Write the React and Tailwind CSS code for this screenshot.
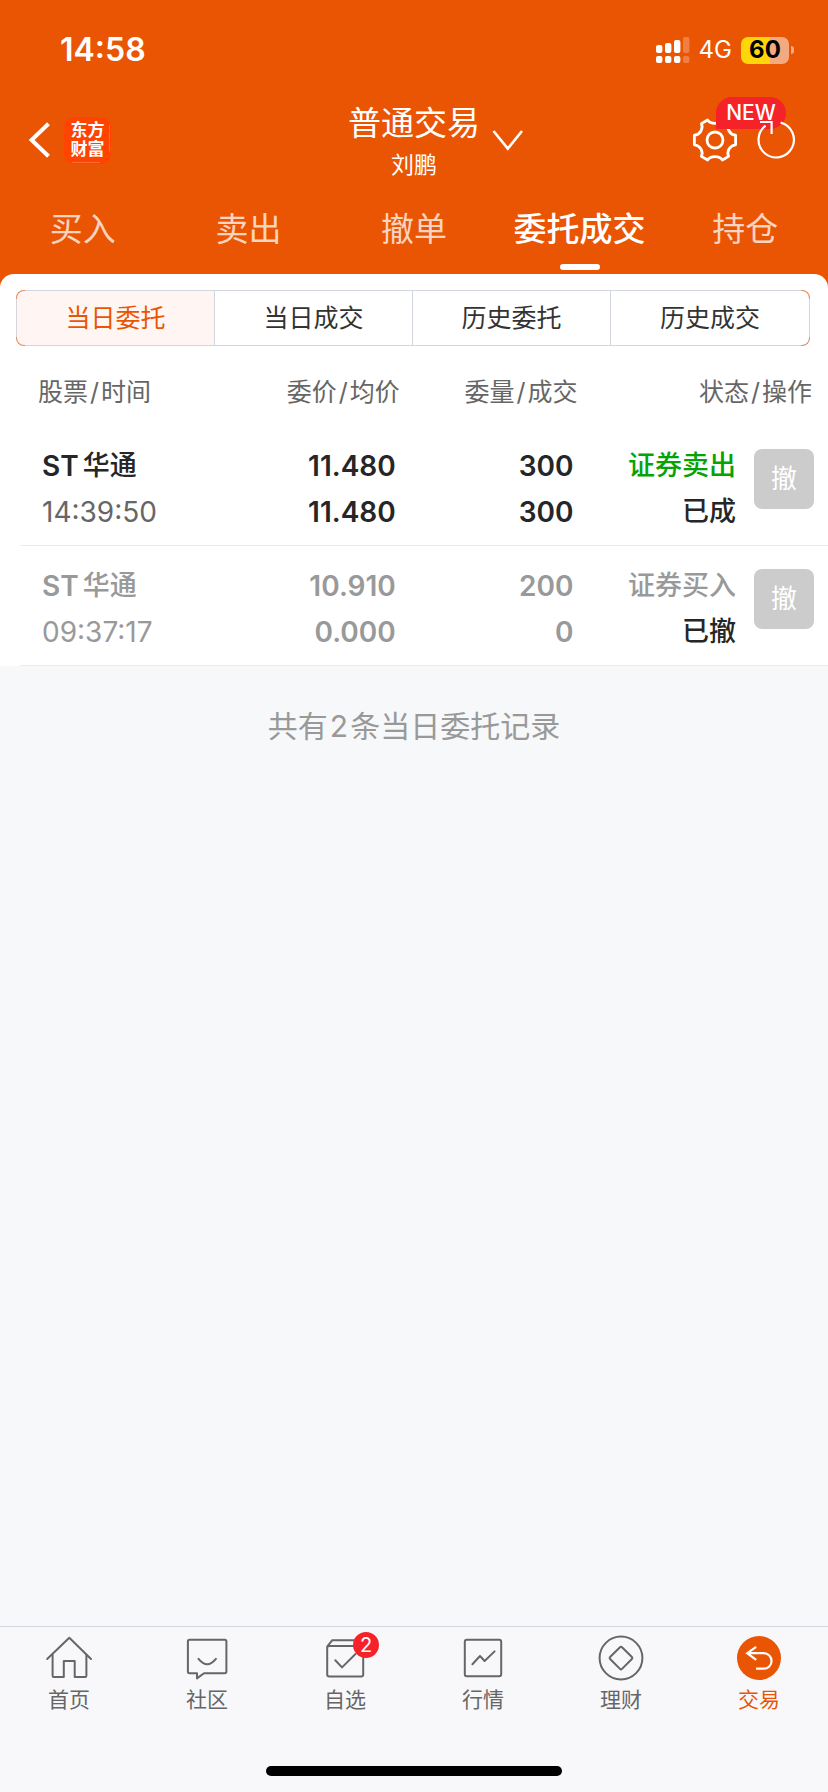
import React from 'react';

const ORDERS = [
  {
    prefix: 'ST', name: '华通', time: '14:39:50', price: '11.480', average: '11.480', amount: '300', filled: '300',
    side: '证券卖出', status: '已成', strong: 'text-[#262626]', timeColor: 'text-[#666666]', sideColor: 'text-[#06a206]',
  },
  {
    prefix: 'ST', name: '华通', time: '09:37:17', price: '10.910', average: '0.000', amount: '200', filled: '0',
    side: '证券买入', status: '已撤', strong: 'text-[#999999]', timeColor: 'text-[#999999]', sideColor: 'text-[#999999]',
  },
];

const TABS = ['买入', '卖出', '撤单', '委托成交', '持仓'];
const SEGMENTS = ['当日委托', '当日成交', '历史委托', '历史成交'];
const COLUMNS = [
  ['股票', '时间'],
  ['委价', '均价'],
  ['委量', '成交'],
  ['状态', '操作'],
];

function Line({ children }) {
  return (
    <svg viewBox="0 0 48 48" className="size-12" fill="none" stroke="currentColor" strokeWidth="2" strokeLinejoin="round" strokeLinecap="round" aria-hidden="true">
      {children}
    </svg>
  );
}

const NAV = [
  {
    label: '首页',
    icon: (
      <Line>
        <path d="M2.2 25 24.3 3.8 46 25" />
        <path d="M7.6 21V41.8q0 1.2 1.2 1.2H18.8V27H29.7V43H40.2q1.2 0 1.2-1.2V21" />
      </Line>
    ),
  },
  {
    label: '社区',
    icon: (
      <Line>
        <path d="M6.5 5.8H41.8q1.6 0 1.6 1.6V37.6q0 1.6-1.6 1.6H21L14 44.4V39.2H6.5q-1.6 0-1.6-1.6V7.4q0-1.6 1.6-1.6Z" />
        <path d="M15.5 24.8q8.7 10.8 17.4 0" />
      </Line>
    ),
  },
  {
    label: '自选',
    badge: '2',
    icon: (
      <Line>
        <rect x="6.2" y="12" width="36" height="30.4" rx="2" />
        <path d="M6.4 12.4 11.3 6.2H37L42 12.4" />
        <path d="M14.3 26.3 21 33.4 34.5 20" />
      </Line>
    ),
  },
  {
    label: '行情',
    icon: (
      <Line>
        <rect x="5.8" y="5.8" width="36.4" height="36.4" rx="2" />
        <path d="M13.4 30.2 21 22 25.6 27 35.6 17.4" />
      </Line>
    ),
  },
  {
    label: '理财',
    icon: (
      <Line>
        <circle cx="24" cy="24" r="21.4" />
        <path d="M23 13.2q1-1 2 0L34.9 23q1 1 0 2L25 34.9q-1 1-2 0L13.1 25q-1-1 0-2Z" />
      </Line>
    ),
  },
  {
    label: '交易',
    active: true,
    icon: (
      <svg viewBox="0 0 48 48" className="size-12" fill="none" aria-hidden="true">
        <circle cx="24" cy="24" r="22" fill="#ea5504" />
        <path d="M21.2 12.8 12.2 19.2 21.2 25.8M12.4 19.2H28.8a7.75 7.75 0 0 1 0 15.5H21" stroke="#fff" strokeWidth="2.2" />
      </svg>
    ),
  },
];

function StatusBar() {
  return (
    <div className="flex h-[100px] items-center justify-between pr-[34px] pl-[60px]">
      <time className="text-[32px] leading-10 font-semibold">14:58</time>
      <div className="flex items-center gap-[9px]">
        <svg viewBox="0 0 34 28" className="h-7 w-[34px]" fill="#fff" aria-hidden="true">
          <rect x="0" y="9" width="6.4" height="8" rx="2" />
          <rect x="9" y="7" width="6.4" height="10" rx="2" />
          <rect x="18" y="4" width="6.4" height="13" rx="2" />
          <rect x="27" y="1" width="6.4" height="16" rx="2" opacity=".25" />
          <rect x="0" y="20" width="6.4" height="7" rx="2" />
          <rect x="9" y="20" width="6.4" height="7" rx="2" />
          <rect x="18" y="20" width="6.4" height="7" rx="2" />
          <rect x="27" y="20" width="6.4" height="7" rx="2" opacity=".25" />
        </svg>
        <span className="text-[24px] leading-8">4G</span>
        <div className="flex items-center gap-[2px]">
          <div className="flex h-[27px] w-12 items-center justify-center rounded-[7px] bg-[linear-gradient(90deg,#ffd60a_60%,#f4aa81_60%)] text-[24px] leading-7 font-bold text-black">
            60
          </div>
          <div className="h-2 w-[3px] rounded-r-full bg-[#f4aa81]" />
        </div>
      </div>
    </div>
  );
}

function TitleBar() {
  return (
    <div className="grid grid-cols-[1fr_auto_1fr] items-start">
      <div className="flex h-20 items-center gap-[14px] pl-7">
        <button type="button" aria-label="返回">
          <svg viewBox="0 0 22 36" className="h-9 w-[22px]" fill="none" stroke="#fff" strokeWidth="4" aria-hidden="true">
            <path d="M20.5 1.8 3.6 18 20.5 34.2" />
          </svg>
        </button>
        <a href="#home" className="relative flex size-[47px] flex-col items-center justify-center rounded-[9px] bg-[#ff4400] text-[17px] leading-[19px] font-bold">
          <span>东方</span>
          <span>财富</span>
          <span className="absolute top-2 right-px h-7 w-px bg-white/20" />
          <span className="absolute bottom-px left-2 h-px w-7 bg-white/20" />
        </a>
      </div>
      <button type="button" className="flex flex-col items-center">
        <span className="text-[33px] leading-[46px]">普通交易</span>
        <span className="text-[23px] leading-[38px]">刘鹏</span>
      </button>
      <div className="flex h-20 items-center justify-between pr-8 pl-3">
        <svg viewBox="0 0 32 22" className="h-[22px] w-8" fill="none" stroke="#fff" strokeWidth="2.6" aria-hidden="true">
          <path d="M1.5 2 15.8 19.6 30 2" />
        </svg>
        <div className="relative flex items-center gap-[18px]">
          <button type="button" aria-label="设置">
            <svg viewBox="0 0 46 46" className="size-[46px]" fill="none" stroke="#fff" strokeWidth="2.8" strokeLinejoin="round" aria-hidden="true">
              <path d="M15.6 3 C18.5 7.6 27.5 7.6 30.4 3 L36.6 6.6 C34.4 11.4 37.6 17.6 43.6 18.2 V27.8 C37.6 28.4 34.4 34.6 36.6 39.4 L30.4 43 C27.5 38.4 18.5 38.4 15.6 43 L9.4 39.4 C11.6 34.6 8.4 28.4 2.4 27.8 V18.2 C8.4 17.6 11.6 11.4 9.4 6.6 Z" />
              <circle cx="23" cy="23" r="8" />
            </svg>
          </button>
          <span className="absolute -top-5 left-6 flex h-8 w-[70px] items-center justify-center rounded-[16px] rounded-bl-none bg-[#f5222a] text-[21px] leading-8 font-medium">
            NEW
          </span>
          <button type="button" aria-label="刷新" className="relative">
            <svg viewBox="0 0 40 46" className="h-[46px] w-10" fill="none" stroke="#fff" strokeWidth="2.2" aria-hidden="true">
              <path d="M24.6 5.6A17.7 17.7 0 1 1 9.6 8.6" />
              <path d="M4 5H15.6V17" />
            </svg>
          </button>
        </div>
      </div>
    </div>
  );
}

function Orders() {
  return (
    <div className="mt-3 pl-5">
      <table className="w-full table-fixed border-collapse">
        <colgroup>
          <col className="w-[25%]" />
          <col className="w-[22%]" />
          <col className="w-[22%]" />
          <col className="w-[31%]" />
        </colgroup>
        <thead>
          <tr className="h-[67px] text-[25px] leading-8 text-[#666666]">
            {COLUMNS.map(([first, second], i) => (
              <th key={first} scope="col" className={`font-normal ${i === 0 ? 'pl-[18px] text-left' : 'text-right'} ${i === 3 ? 'pr-4' : ''}`}>
                {first}
                <span className="mx-[2px]">/</span>
                {second}
              </th>
            ))}
          </tr>
        </thead>
        <tbody>
          {ORDERS.map((o) => (
            <tr key={o.time} className={`h-[120px] border-b border-[#e9eaec] text-[28px] leading-[46px] ${o.strong}`}>
              <td className="pt-2 pl-[22px]">
                <div className="flex gap-1">
                  <span className="font-semibold">{o.prefix}</span>
                  <span className="text-[27px] font-medium">{o.name}</span>
                </div>
                <div className={o.timeColor}>{o.time}</div>
              </td>
              <td className="pt-2 pr-1 text-right font-semibold">
                <div>{o.price}</div>
                <div>{o.average}</div>
              </td>
              <td className="pt-2 pr-1 text-right font-semibold">
                <div>{o.amount}</div>
                <div>{o.filled}</div>
              </td>
              <td className="pt-2 pr-[14px]">
                <div className="flex items-start justify-end gap-[18px]">
                  <div className="text-right text-[27px] font-medium">
                    <div className={o.sideColor}>{o.side}</div>
                    <div className="text-[#262626]">{o.status}</div>
                  </div>
                  <button type="button" className="mt-[6px] flex size-[60px] items-center justify-center rounded-lg bg-[#cccccc] text-[26px] leading-8 text-white">
                    撤
                  </button>
                </div>
              </td>
            </tr>
          ))}
        </tbody>
      </table>
    </div>
  );
}

export default function App() {
  return (
    <div className="flex min-h-screen flex-col bg-[#f7f8fa] font-['Inter','Noto_Sans_CJK_SC',sans-serif]">
      <header className="bg-[#ea5504] text-white">
        <StatusBar />
        <TitleBar />
        <nav className="grid grid-cols-5">
          {TABS.map((tab, i) => (
            <button key={tab} type="button" className={`relative h-[90px] text-[33px] leading-[46px] whitespace-nowrap ${i === 3 ? 'font-medium' : 'text-white/75'}`}>
              {tab}
              {i === 3 && <span className="absolute bottom-1 left-1/2 h-[6px] w-10 -translate-x-1/2 rounded-[3px] bg-white" />}
            </button>
          ))}
        </nav>
      </header>

      <main className="flex-1">
        <div className="bg-[#ea5504]">
          <section className="rounded-t-[14px] bg-white pt-4">
            <div className="relative mr-[18px] ml-4">
              <div className="grid h-14 grid-cols-4 divide-x divide-[#d3d6de] overflow-hidden rounded-lg border border-[#d3d6de]">
                {SEGMENTS.map((segment, i) => (
                  <button key={segment} type="button" className={`text-[25px] leading-8 ${i === 0 ? 'bg-[#fff5f2] text-[#ea5504]' : 'text-[#333333]'}`}>
                    {segment}
                  </button>
                ))}
              </div>
              <span className="absolute top-0 left-0 size-[9px] rounded-tl-lg border-t border-l border-[#e9905f]" />
              <span className="absolute bottom-0 left-0 size-[9px] rounded-bl-lg border-b border-l border-[#e9905f]" />
              <span className="absolute top-0 right-0 size-[9px] rounded-tr-lg border-t border-r border-[#e9905f]" />
              <span className="absolute right-0 bottom-0 size-[9px] rounded-br-lg border-r border-b border-[#e9905f]" />
            </div>
            <Orders />
          </section>
        </div>
        <p className="py-10 text-center text-[30px] leading-10 text-[#999999]">
          共有<span className="mx-[2px]">2</span>条当日委托记录
        </p>
      </main>

      <footer className="border-t border-[#d3d6de] bg-[#f8f8fb]">
        <nav className="grid grid-cols-6 pt-[7px]">
          {NAV.map((item) => (
            <a key={item.label} href={`#${item.label}`} className={`flex flex-col items-center gap-[2px] text-[21px] leading-8 ${item.active ? 'text-[#ea5504]' : 'text-[#666666]'}`}>
              <span className="relative">
                {item.icon}
                {item.badge && (
                  <span className="absolute -top-[2px] -right-[10px] flex size-[26px] items-center justify-center rounded-full bg-[#f5222a] text-[20px] leading-[26px] text-white">
                    {item.badge}
                  </span>
                )}
              </span>
              {item.label}
            </a>
          ))}
        </nav>
        <div className="flex justify-center pt-[50px] pb-4">
          <div className="h-[10px] w-[296px] rounded-full bg-black" />
        </div>
      </footer>
    </div>
  );
}
